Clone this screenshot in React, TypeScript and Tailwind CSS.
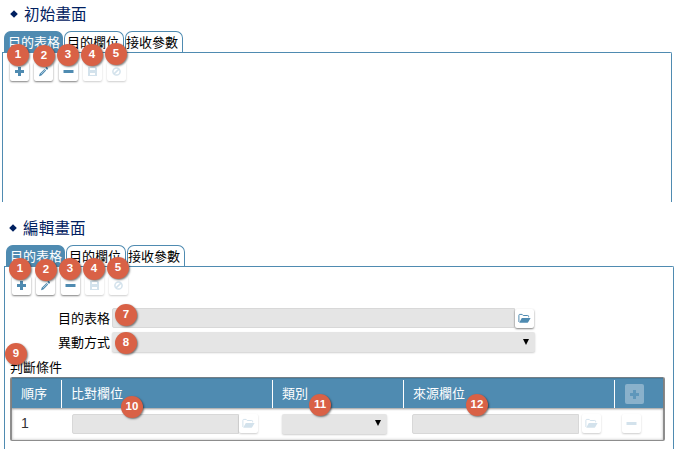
import React from "react";

type IconName = "plus" | "edit" | "minus" | "save" | "ban" | "folder";

function Icon({ name }: { name: IconName }) {
  return (
    <svg width="13" height="13" viewBox="0 0 13 13" fill="currentColor" className="block shrink-0">
      {name === "plus" && <path d="M5 2h3v3h3v3H8v3H5V8H2V5h3z" />}
      {name === "minus" && <path d="M1.5 5h10v3h-10z" />}
      {name === "edit" && (
        <>
          <path d="M2 11.2l.7-2.5 4.8-4.8 1.7 1.7-4.8 4.9z" />
          <path d="M8.3 3.1l.8-.8c.3-.3.7-.3 1 0l.8.8c.3.3.3.7 0 1l-.9.8z" />
          <path d="M4 9l4-4" stroke="white" strokeWidth=".5" />
        </>
      )}
      {name === "save" && (
        <path fillRule="evenodd" d="M2 2h8l1 1v8H2zM4 3v2h5V3zM4 8v2h5V8z" />
      )}
      {name === "ban" && (
        <g fill="none" stroke="currentColor" strokeWidth="1.5">
          <circle cx="6.5" cy="6.5" r="3.6" />
          <path d="M4.1 8.9l4.8-4.8" />
        </g>
      )}
      {name === "folder" && (
        <>
          <path d="M.9 10V3.2c0-.5.3-.8.8-.8h2.5l1 1.1h4.5c.6 0 .9.3.9.8v1" fill="none" stroke="currentColor" strokeWidth="1" />
          <path d="M3.8 6H12.6l-2.3 4.1c-.2.4-.5.6-.9.6H1.2z" />
        </>
      )}
    </svg>
  );
}

function Button({ icon, disabled = false }: { icon: IconName; disabled?: boolean }) {
  return (
    <button
      className={`flex h-[19px] w-[19px] shrink-0 items-center justify-center rounded-[2px] bg-white ${
        disabled
          ? "text-[#d3e2ec] shadow-[0_1px_2px_rgba(0,0,0,0.2)]"
          : "text-[#4f8bb1] shadow-[0_1px_2px_rgba(0,0,0,0.5)]"
      }`}
    >
      <Icon name={icon} />
    </button>
  );
}

function Badge({ n, place }: { n: number; place: string }) {
  return (
    <span
      className={`absolute z-10 flex h-[22px] w-[22px] items-center justify-center rounded-full bg-[#d96146] font-['Liberation_Sans',sans-serif] text-[11.5px] leading-none font-bold text-white shadow-[1px_1px_2px_rgba(0,0,0,0.5)] ${place}`}
    >
      {n}
    </span>
  );
}

function Title({ children }: { children: React.ReactNode }) {
  return (
    <h2 className="flex h-[20px] items-center gap-[6px] text-[15.5px] tracking-[0.2px] text-[#002060]">
      <svg width="8" height="8" viewBox="0 0 8 8" fill="currentColor">
        <path d="M4 .2L7.8 4 4 7.8.2 4z" />
      </svg>
      <span className="-mt-px">{children}</span>
    </h2>
  );
}

function Tabs() {
  return (
    <div className="flex h-[21px] gap-[1px] text-[13px] leading-[20px]">
      <div className="w-[59px] rounded-t-[7px] border border-b-0 border-[#4f8bb1] bg-[#4f8bb1] pl-[3px] whitespace-nowrap text-white">目的表格</div>
      <div className="w-[60px] rounded-t-[7px] border border-b-0 border-[#4f8bb1] pl-[2px] whitespace-nowrap text-black">目的欄位</div>
      <div className="w-[58px] rounded-t-[7px] border border-b-0 border-[#4f8bb1] whitespace-nowrap text-black">接收參數</div>
    </div>
  );
}

function Toolbar() {
  return (
    <div className="flex h-[19px] gap-[5.3px]">
      <Button icon="plus" />
      <Button icon="edit" />
      <Button icon="minus" />
      <Button icon="save" disabled />
      <Button icon="ban" disabled />
    </div>
  );
}

function Input({ width }: { width: string }) {
  return <div className={`h-[20px] shrink-0 rounded-l-[2px] border border-[#d8d8d8] bg-[#e5e5e5] ${width}`} />;
}

function Select({ width }: { width: string }) {
  return (
    <div className={`flex h-[20px] shrink-0 items-center justify-end rounded-[2px] bg-[#e5e5e5] pr-[6px] shadow-[0_1px_2px_rgba(0,0,0,0.2)] ${width}`}>
      <svg width="6" height="6" viewBox="0 0 6 6" className="-mt-px">
        <path d="M0 0h6L3 6z" />
      </svg>
    </div>
  );
}

function ConditionTable() {
  return (
    <div className="relative ml-[5px] flex h-[64px] w-[655px] flex-col rounded-[2px] border-x-2 border-y border-[#8d8d8d] border-t-[#77828a] bg-white text-[13px]">
      <div className="grid h-[30px] grid-cols-[50px_211px_131px_211px_1fr] border-t border-[#467d9f] bg-[#4f8bb1] pt-px leading-[26px] text-white shadow-[0_1px_2px_rgba(0,0,0,0.3)]">
        <div className="border-r border-white pl-[9px]">順序</div>
        <div className="border-r border-white pl-[9px]">比對欄位</div>
        <div className="border-r border-white pl-[9px]">類別</div>
        <div className="border-r border-white pl-[9px]">來源欄位</div>
        <div className="flex items-center pl-[10px]">
          <button className="flex h-[20px] w-[19px] items-center justify-center rounded-[2px] bg-[#8ab1cb] text-[#5f97bb]">
            <Icon name="plus" />
          </button>
        </div>
      </div>
      <div className="grid flex-1 grid-cols-[50px_211px_131px_211px_1fr] items-center pb-px shadow-[inset_0_0_3px_rgba(0,0,0,0.3)]">
        <div className="pl-[9px] font-['Liberation_Sans',sans-serif] text-[14px] text-[#333]">1</div>
        <div className="flex pl-[10px]">
          <Input width="w-[167px]" />
          <Button icon="folder" disabled />
        </div>
        <div className="pl-[9px]">
          <Select width="w-[105px]" />
        </div>
        <div className="flex gap-[3px] pl-[8px]">
          <Input width="w-[167px]" />
          <Button icon="folder" disabled />
        </div>
        <div className="pl-[7px]">
          <Button icon="minus" disabled />
        </div>
      </div>
      <Badge n={10} place="left-[109px] top-[18px]" />
      <Badge n={11} place="left-[297px] top-[16px]" />
      <Badge n={12} place="left-[454px] top-[16px]" />
    </div>
  );
}

export default function App() {
  return (
    <main className="h-[457px] w-[684px] overflow-hidden bg-white font-['Noto_Sans_CJK_TC',sans-serif]">
      <section className="relative h-[202px] pt-[4px]">
        <div className="pl-[10px]"><Title>初始畫面</Title></div>
        <div className="mt-[7px] pl-[4px]"><Tabs /></div>
        <div className="ml-[2px] h-[150px] w-[670px] rounded-tr-[2px] border border-b-0 border-[#4f8bb1] pt-[9px] pl-[7px]">
          <Toolbar />
        </div>
        <Badge n={1} place="left-[7px] top-[44px]" />
        <Badge n={2} place="left-[33px] top-[45px]" />
        <Badge n={3} place="left-[57px] top-[44px]" />
        <Badge n={4} place="left-[81px] top-[44px]" />
        <Badge n={5} place="left-[105px] top-[43px]" />
      </section>

      <section className="relative h-[247px] pt-[16px]">
        <div className="pl-[9px]"><Title>編輯畫面</Title></div>
        <div className="mt-[7px] pl-[6px]"><Tabs /></div>
        <div className="ml-[4px] h-[183px] w-[670px] rounded-tr-[2px] border border-b-0 border-[#4f8bb1] pt-[9px]">
          <div className="pl-[7px]"><Toolbar /></div>
          <div className="mt-[13px] flex h-[20px] items-center text-[13px]">
            <span className="w-[107px] shrink-0 pl-[53px] whitespace-nowrap">目的表格</span>
            <Input width="w-[403px]" />
            <Button icon="folder" />
          </div>
          <div className="mt-[4px] flex h-[20px] items-center text-[13px]">
            <span className="w-[107px] shrink-0 pl-[53px] whitespace-nowrap">異動方式</span>
            <Select width="w-[423px]" />
          </div>
          <div className="mt-[6px] h-[19px] pl-[5px] text-[13px] leading-[18px]">判斷條件</div>
          <ConditionTable />
        </div>
        <Badge n={1} place="left-[9px] top-[56px]" />
        <Badge n={2} place="left-[35px] top-[57px]" />
        <Badge n={3} place="left-[59px] top-[56px]" />
        <Badge n={4} place="left-[83px] top-[56px]" />
        <Badge n={5} place="left-[107px] top-[55px]" />
        <Badge n={7} place="left-[115px] top-[102px]" />
        <Badge n={8} place="left-[115px] top-[130px]" />
        <Badge n={9} place="left-[5px] top-[141px]" />
      </section>
    </main>
  );
}
